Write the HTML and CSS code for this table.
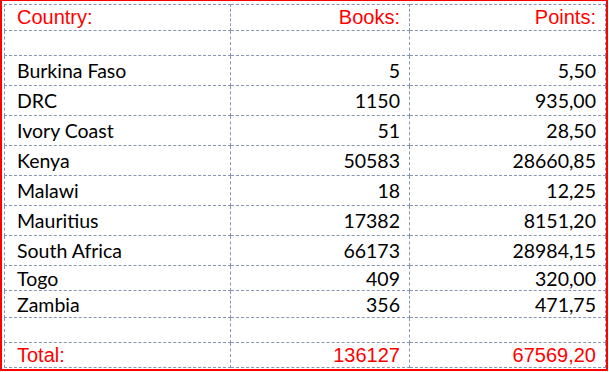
FILE: index.html
```html
<!DOCTYPE html>
<html lang="en">
<head>
    <meta charset="UTF-8">
    <title>Books per Country</title>
    <link rel="stylesheet" href="styles.css">
</head>
<body>
    <div class="sheet">
        <table class="grid">
            <colgroup>
                <col class="col-country">
                <col class="col-books">
                <col class="col-points">
            </colgroup>
            <tr class="head">
                <td>Country:</td>
                <td class="num">Books:</td>
                <td class="num">Points:</td>
            </tr>
            <tr class="blank"><td></td><td></td><td></td></tr>
            <tr class="row"><td>Burkina Faso</td><td class="num">5</td><td class="num">5,50</td></tr>
            <tr class="row"><td>DRC</td><td class="num">1150</td><td class="num">935,00</td></tr>
            <tr class="row"><td>Ivory Coast</td><td class="num">51</td><td class="num">28,50</td></tr>
            <tr class="row"><td>Kenya</td><td class="num">50583</td><td class="num">28660,85</td></tr>
            <tr class="row"><td>Malawi</td><td class="num">18</td><td class="num">12,25</td></tr>
            <tr class="row"><td>Mauritius</td><td class="num">17382</td><td class="num">8151,20</td></tr>
            <tr class="row"><td>South Africa</td><td class="num">66173</td><td class="num">28984,15</td></tr>
            <tr class="row short"><td>Togo</td><td class="num">409</td><td class="num">320,00</td></tr>
            <tr class="row mid"><td>Zambia</td><td class="num">356</td><td class="num">471,75</td></tr>
            <tr class="blank"><td></td><td></td><td></td></tr>
            <tr class="total">
                <td>Total:</td>
                <td class="num">136127</td>
                <td class="num">67569,20</td>
            </tr>
        </table>
    </div>
</body>
</html>
```

FILE: styles.css
```css
:root {
    --red: #ff0000;
    --grid-line: #8496b2;
}

body {
    margin: 0;
    background: #fff;
}

.sheet {
    width: 601px;
    height: 363px;
    padding: 3px 1px 2px 2px;
    border: 2px solid var(--red);
    border-top-width: 1px;
}

.grid {
    border-collapse: collapse;
    table-layout: fixed;
    width: 601px;
}

.col-country { width: 226px; }
.col-books { width: 179px; }
.col-points { width: 196px; }

.grid td {
    border: 1px dashed var(--grid-line);
    padding: 0 9px 0 12px;
    font-family: "Lato", "Open Sans", sans-serif;
    font-size: 19.5px;
    color: #000;
    white-space: nowrap;
    overflow: hidden;
}

.grid td.num {
    text-align: right;
}

.head td,
.total td {
    font-family: "Liberation Sans", Arial, sans-serif;
    font-size: 20px;
    color: var(--red);
}

.head td { height: 25px; }
.blank td { height: 24px; }
.row td { height: 29px; }
.row.short td { height: 24px; }
.row.mid td { height: 26px; }
.total td { height: 24px; }
```
